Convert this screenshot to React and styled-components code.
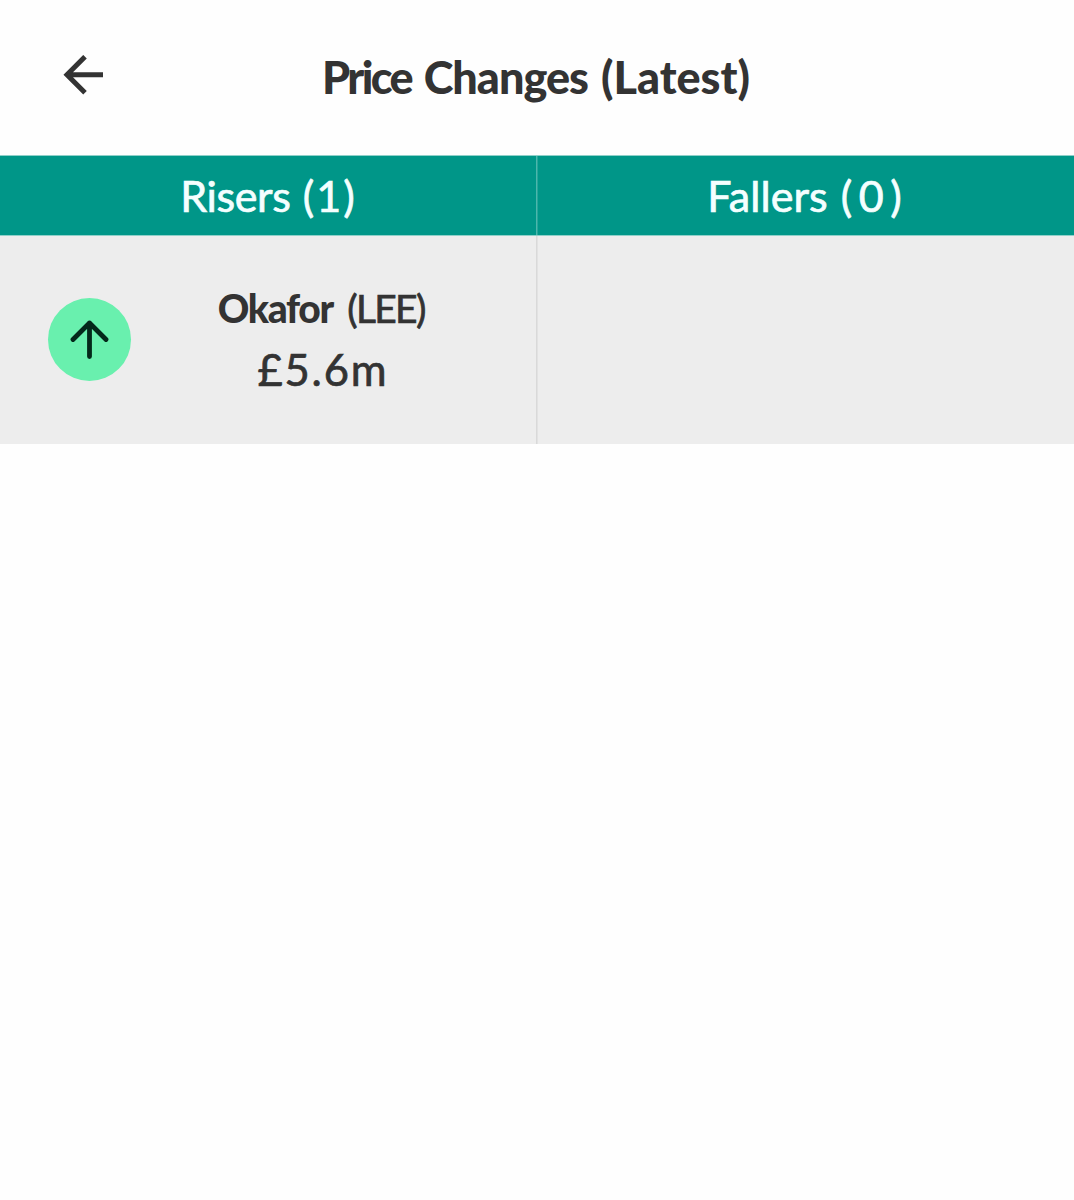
import React from 'react'
import styled, { createGlobalStyle, ThemeProvider } from 'styled-components'

const theme = {
  color: {
    text: '#333333',
    primary: '#009688',
    row: '#ededed',
    up: '#69f0ae',
    upIcon: '#04281a',
  },
  font: "Lato, 'Open Sans', sans-serif",
}

const risers = [{ id: 1, name: 'Okafor', team: 'LEE', price: '£5.6m' }]
const fallers = []

const BackIcon = () => (
  <svg width="40" height="40" viewBox="0 0 40 40" fill="none" stroke="currentColor" strokeWidth="5">
    <path d="M40.5 19.7H4M22 1.7L4 19.7L22 37.7" />
  </svg>
)

const UpIcon = () => (
  <svg width="40" height="40" viewBox="0 0 40 40" fill="none" stroke="currentColor" strokeWidth="4.8" strokeLinecap="round" strokeLinejoin="round">
    <path d="M19.5 37.5V4M3 20.5L19.5 4L36 20.5" />
  </svg>
)

const PlayerCell = ({ player }) => (
  <Cell>
    <Cell.Badge>
      <UpIcon />
    </Cell.Badge>
    <Player>
      <Player.Name>
        <Word $bold $size={39} $spacing={-1.3}>{player.name}</Word>
        <Word $size={39} $spacing={-1.7} $gap={13}>{`(${player.team})`}</Word>
      </Player.Name>
      <Word $size={43.5} $spacing={1.8}>{player.price}</Word>
    </Player>
  </Cell>
)

const App = () => (
  <ThemeProvider theme={theme}>
    <GlobalStyle />
    <Header>
      <Header.Back aria-label="Back">
        <BackIcon />
      </Header.Back>
      <Header.Title>
        <Word $bold $size={45} $spacing={-2.6}>Price</Word>
        <Word $bold $size={45} $spacing={-1} $gap={10}>Changes</Word>
        <Word $bold $size={45} $spacing={0} $gap={12}>(Latest)</Word>
      </Header.Title>
    </Header>
    <Columns>
      <Tab>
        <Word $size={43} $spacing={-0.4}>Risers</Word>
        <Word $size={43} $spacing={2} $gap={12}>{`(${risers.length})`}</Word>
      </Tab>
      <Tab>
        <Word $size={43} $spacing={0.1}>Fallers</Word>
        <Word $size={43} $spacing={6.5} $gap={13}>{`(${fallers.length})`}</Word>
      </Tab>
    </Columns>
    {risers.map(player => (
      <Columns key={player.id}>
        <PlayerCell player={player} />
        <Cell />
      </Columns>
    ))}
  </ThemeProvider>
)

const GlobalStyle = createGlobalStyle`
  * {
    box-sizing: border-box;
  }
  body {
    margin: 0;
    background: #fefefe;
    color: ${props => props.theme.color.text};
    font-family: ${props => props.theme.font};
  }
`

const Word = styled.span`
  font-size: ${props => props.$size}px;
  font-weight: ${props => (props.$bold ? 900 : 400)};
  letter-spacing: ${props => props.$spacing}px;
  margin-left: ${props => props.$gap || 0}px;
  margin-right: ${props => -props.$spacing}px;
  line-height: 1;
  white-space: nowrap;
  -webkit-text-stroke: ${props => (props.$bold ? 0 : 0.7)}px currentColor;
`

const Header = styled.header`
  display: grid;
  grid-template-columns: 168px 1fr 168px;
  align-items: center;
  height: 155px;
`

Header.Back = styled.button`
  display: flex;
  padding: 0 0 6px 63px;
  border: 0;
  background: none;
  color: inherit;
`

Header.Title = styled.h1`
  display: flex;
  justify-content: center;
  margin: 0;
  padding-right: 2px;
`

const Columns = styled.div`
  display: grid;
  grid-template-columns: 1fr 1fr;
`

const Tab = styled.div`
  display: flex;
  align-items: center;
  justify-content: center;
  height: 81px;
  padding-right: 2px;
  border-top: 1px solid #8fd0c9;
  border-bottom: 1px solid #8fd0c9;
  background: ${props => props.theme.color.primary};
  color: #f4ffff;
  &:first-child {
    box-shadow: inset -1px 0 #4db6ac;
  }
  & + & {
    box-shadow: inset 1px 0 #26a69a;
  }
`

const Cell = styled.div`
  display: flex;
  align-items: center;
  height: 208px;
  padding: 0 0 2px 48px;
  background: ${props => props.theme.color.row};
  &:first-child {
    box-shadow: inset -1px 0 #d9d9d9;
  }
  & + & {
    box-shadow: inset 1px 0 #e2e2e2;
  }
`

Cell.Badge = styled.div`
  display: flex;
  align-items: center;
  justify-content: center;
  width: 83px;
  height: 83px;
  border-radius: 50%;
  background: ${props => props.theme.color.up};
  color: ${props => props.theme.color.upIcon};
`

const Player = styled.div`
  display: flex;
  flex: 1;
  flex-direction: column;
  align-items: center;
  gap: 20px;
  padding: 2px 24px 0 0;
`

Player.Name = styled.div`
  display: flex;
`

export default App
